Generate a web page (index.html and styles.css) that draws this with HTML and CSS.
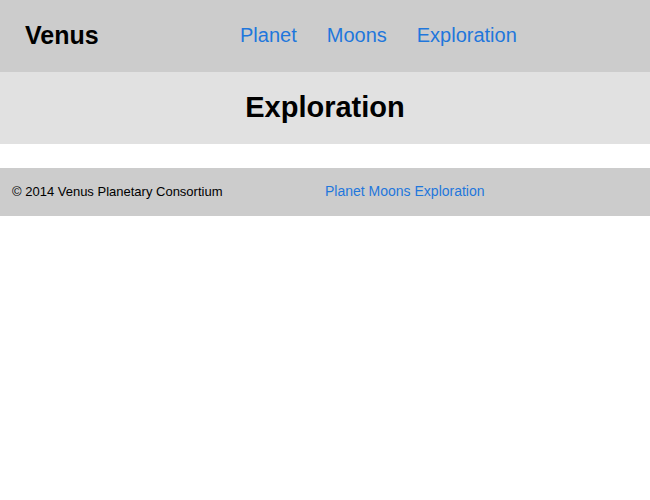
FILE: index.html
```html
<!DOCTYPE html>
<html>
<head>
<meta charset="utf-8">
<title>Venus</title>
<link rel="stylesheet" href="styles.css">
</head>
<body>
<header class="site-header">
  <div class="logo">Venus</div>
  <nav class="main-nav">
    <a href="#">Planet</a>
    <a href="#">Moons</a>
    <a href="#">Exploration</a>
  </nav>
</header>
<section class="title-band">
  <h1>Exploration</h1>
</section>
<footer class="site-footer">
  <div class="copyright">© 2014 Venus Planetary Consortium</div>
  <nav class="footer-nav">
    <a href="#">Planet</a>
    <a href="#">Moons</a>
    <a href="#">Exploration</a>
  </nav>
</footer>
</body>
</html>
```
FILE: styles.css
```css
html, body {
  margin: 0;
  padding: 0;
  background: #ffffff;
  font-family: "Liberation Sans", Arial, sans-serif;
  color: #000;
}
a {
  color: #1f77dc;
  text-decoration: none;
}
.site-header {
  display: flex;
  align-items: center;
  box-sizing: border-box;
  height: 72px;
  padding: 0 0 2px 25px;
  background: #cccccc;
}
.logo {
  font-size: 25px;
  font-weight: bold;
  width: 215px;
}
.main-nav {
  display: flex;
  gap: 30px;
  font-size: 20px;
}
.title-band {
  display: flex;
  align-items: center;
  justify-content: center;
  box-sizing: border-box;
  height: 72px;
  padding-bottom: 2px;
  background: #e1e1e1;
  margin-bottom: 24px;
}
.title-band h1 {
  margin: 0;
  font-size: 29px;
  font-weight: bold;
}
.site-footer {
  display: grid;
  grid-template-columns: 1fr 1fr;
  align-items: center;
  box-sizing: border-box;
  height: 48px;
  padding: 0 12px 2px;
  background: #cccccc;
}
.copyright {
  font-size: 13px;
}
.footer-nav {
  font-size: 14px;
}
```
